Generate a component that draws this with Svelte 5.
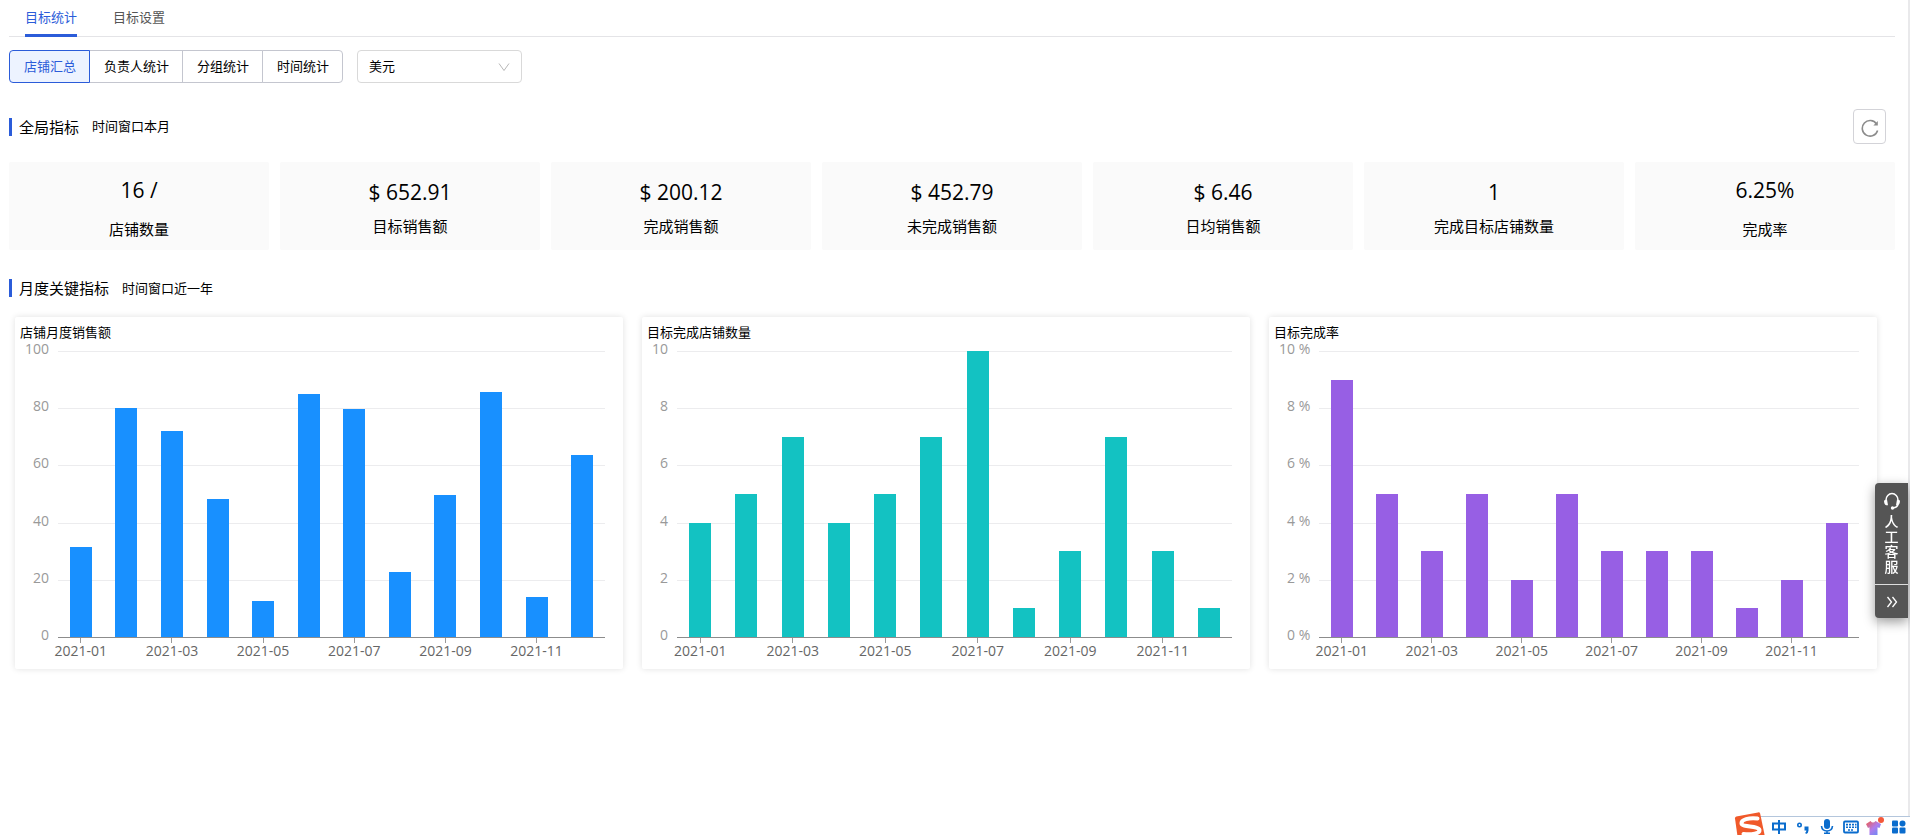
<script>
	const tabs = ['目标统计', '目标设置'];
	const views = ['店铺汇总', '负责人统计', '分组统计', '时间统计'];

	let activeTab = $state('目标统计');
	let activeView = $state('店铺汇总');
	let currency = $state('usd');

	const stats = [
		{ value: '16 /', label: '店铺数量', spaced: true },
		{ value: '$ 652.91', label: '目标销售额' },
		{ value: '$ 200.12', label: '完成销售额' },
		{ value: '$ 452.79', label: '未完成销售额' },
		{ value: '$ 6.46', label: '日均销售额' },
		{ value: '1', label: '完成目标店铺数量' },
		{ value: '6.25%', label: '完成率', spaced: true }
	];

	const months = Array.from({ length: 12 }, (_, i) => '2021-' + String(i + 1).padStart(2, '0'));

	const charts = [
		{
			title: '店铺月度销售额',
			color: 'blue',
			max: 100,
			ticks: ['100', '80', '60', '40', '20', '0'],
			values: [31.6, 80, 72.2, 48.3, 12.7, 85.1, 79.8, 22.8, 49.7, 85.8, 14, 63.5]
		},
		{
			title: '目标完成店铺数量',
			color: 'teal',
			max: 10,
			ticks: ['10', '8', '6', '4', '2', '0'],
			values: [4, 5, 7, 4, 5, 7, 10, 1, 3, 7, 3, 1]
		},
		{
			title: '目标完成率',
			color: 'purple',
			max: 10,
			ticks: ['10 %', '8 %', '6 %', '4 %', '2 %', '0 %'],
			values: [9, 5, 3, 5, 2, 5, 3, 3, 3, 1, 2, 4]
		}
	];
</script>

<div class="page">
	<nav class="tabs">
		{#each tabs as tab}
			<button class="tab" class:active={activeTab === tab} onclick={() => (activeTab = tab)}>{tab}</button>
		{/each}
	</nav>

	<div class="toolbar">
		<div class="group">
			{#each views as view}
				<button class:active={activeView === view} onclick={() => (activeView = view)}>{view}</button>
			{/each}
		</div>
		<div class="select">
			<select aria-label="币种" bind:value={currency}>
				<option value="usd">美元</option>
				<option value="cny">人民币</option>
			</select>
			<svg viewBox="0 0 12 12" width="12" height="12"><path d="M1 2.5 6 9.5 11 2.5" /></svg>
		</div>
	</div>

	<section>
		<header class="overview">
			<h2>全局指标</h2>
			<span>时间窗口本月</span>
			<button class="refresh" aria-label="刷新">
				<svg viewBox="0 0 18 18" width="18" height="18">
					<path d="M15.6 5A7.8 7.8 0 1 0 16.6 11.5" />
					<path class="head" d="M16.8 2v4.400h-4.400z" />
				</svg>
			</button>
		</header>
		<div class="stats">
			{#each stats as stat}
				<div class="stat" class:spaced={stat.spaced}>
					<strong>{stat.value}</strong>
					<span>{stat.label}</span>
				</div>
			{/each}
		</div>
	</section>

	<section>
		<header class="monthly">
			<h2>月度关键指标</h2>
			<span>时间窗口近一年</span>
		</header>
		<div class="charts">
			{#each charts as chart}
				<article class="chart">
					<h3>{chart.title}</h3>
					<div class="body">
						<div class="y-axis">
							{#each chart.ticks as tick}
								<span>{tick}</span>
							{/each}
						</div>
						<div class="plot">
							<div class="area">
								<div class="grid">
									{#each chart.ticks as tick}
										<i></i>
									{/each}
								</div>
								<div class="bars">
									{#each chart.values as value, i}
										<div class="band">
											<div
												class="bar {chart.color}"
												title="{months[i]}: {value}"
												style="height: {(value / chart.max) * 100}%"
											></div>
										</div>
									{/each}
								</div>
							</div>
							<div class="x-axis">
								{#each months as month, i}
									<div class="month">
										{#if i % 2 === 0}<span>{month}</span>{/if}
									</div>
								{/each}
							</div>
						</div>
					</div>
				</article>
			{/each}
		</div>
	</section>
</div>

<aside class="service">
	<button class="contact">
		<svg viewBox="0 0 18 18" width="18" height="18">
			<path class="line" d="M3 9.5V8a6 6.4 0 0 1 12 0v1.5M15 12.5q-.8 3-5 3.5" />
			<path d="M1 8.5 4 7.5 5 13.3H3.2Q1 12.5 1 8.5zM17 8.5l-3-1-1 5.8h1.8Q17 12.5 17 8.5z" />
			<circle cx="9.5" cy="16" r="1.7" />
		</svg>
		<span>人工客服</span>
	</button>
	<button class="collapse" aria-label="收起">
		<svg viewBox="0 0 12 12" width="12" height="12"><path d="M1.5 1 5.5 6 1.5 11M6.5 1 10.5 6 6.5 11" /></svg>
	</button>
</aside>

<div class="ime">
	<svg class="logo" viewBox="0 0 32 25" width="32" height="25">
		<path fill="#f0592a" d="M1 6.5Q.8 5 2.3 4.6L24 .4q1.8-.3 2.2 1.4L31 25H3.6z" />
		<path
			fill="none"
			stroke="#fff"
			stroke-width="4"
			stroke-linecap="round"
			d="M23.500 6.500C15 5.500 7 7.500 7.500 11.500c.5 4 17 2 18 6.500.5 3.500-8 5-16 4"
		/>
	</svg>
	<div class="tools">
		<svg viewBox="0 0 16 16" width="16" height="16">
			<path fill="none" stroke="#0a6ccd" stroke-width="2" d="M2 4.500h12v6H2zM8 1v14" />
		</svg>
		<svg viewBox="0 0 16 16" width="16" height="16">
			<circle cx="4.5" cy="6" r="1.7" fill="none" stroke="#0a6ccd" stroke-width="1.6" />
			<path fill="#0a6ccd" d="M9.500 7.500h4v4q0 2.500-2.500 3.500l-.8-1.200q1.200-.8 1.200-2.300H9.500z" />
		</svg>
		<svg viewBox="0 0 16 16" width="16" height="16">
			<rect x="5" y="0" width="6" height="10" rx="3" fill="#0a6ccd" />
			<path fill="none" stroke="#0a6ccd" stroke-width="1.6" d="M2.500 7q.5 5 5.500 5t5.500-5M8 12v2.500M5 14.200h6" />
		</svg>
		<svg viewBox="0 0 16 16" width="16" height="16">
			<rect x="1" y="2.500" width="14" height="11" rx="1" fill="none" stroke="#0a6ccd" stroke-width="1.8" />
			<path
				fill="none"
				stroke="#0a6ccd"
				stroke-width="1.6"
				stroke-dasharray="2 1"
				d="M3 5.600h10.500M3 8.200h10.500M5 11h6"
			/>
		</svg>
		<svg class="skin" viewBox="0 0 20 20" width="20" height="20">
			<defs>
				<linearGradient id="shirt" x1="0" y1="0" x2="1" y2="1">
					<stop offset="0" stop-color="#f25a48" />
					<stop offset="0.5" stop-color="#b07cec" />
					<stop offset="1" stop-color="#5b8cf5" />
				</linearGradient>
			</defs>
			<path fill="url(#shirt)" d="M1 7l4.500-3q2.500 3 5 0l5.500 3-1.500 4-2-.8V18h-8v-7.800L3 11z" />
			<circle cx="16" cy="3" r="3" fill="#f4583a" />
		</svg>
		<svg viewBox="0 0 16 16" width="16" height="16" fill="#0a6ccd">
			<rect x="1" y="1.500" width="6" height="6" rx="1" />
			<circle cx="11.500" cy="4.500" r="3" />
			<rect x="1" y="8.500" width="6" height="6" rx="1" />
			<rect x="8.500" y="8.500" width="6" height="6" rx="1" />
		</svg>
	</div>
</div>

<style>
	:global(body) {
		background: #fff;
		overflow: hidden;
	}

	.page {
		min-height: 100vh;
		box-sizing: border-box;
		padding: 0 13px 0 9px;
		border-right: 2px solid #e9e9eb;
		color: #000;
		font-family: 'Open Sans', 'Noto Sans CJK SC', sans-serif;
		font-size: 13px;
	}

	button,
	select {
		font: inherit;
		color: inherit;
		margin: 0;
		cursor: pointer;
	}

	h2,
	h3 {
		margin: 0;
		font-weight: 400;
	}

	svg {
		display: block;
	}

	.tabs {
		display: flex;
		gap: 36px;
		height: 36px;
		padding-left: 16px;
		border-bottom: 1px solid #e4e4e7;
	}
	.tab {
		height: 37px;
		padding: 0 0 2px;
		border: none;
		border-bottom: 3px solid transparent;
		background: none;
		color: #555;
	}
	.tab.active {
		color: #2b5cd9;
		border-bottom-color: #2b5cd9;
	}

	.toolbar {
		display: flex;
		gap: 14px;
		margin-top: 13px;
	}
	.group {
		display: flex;
	}
	.group button {
		height: 33px;
		padding: 0 13px 2px 14px;
		margin-left: -1px;
		border: 1px solid #c4c6cf;
		background: #fff;
	}
	.group button:first-child {
		margin-left: 0;
		border-radius: 4px 0 0 4px;
	}
	.group button:last-child {
		border-radius: 0 4px 4px 0;
	}
	.group button.active {
		position: relative;
		border-color: #2b5cd9;
		background: #edf3ff;
		color: #2b5cd9;
	}

	.select {
		display: grid;
		align-items: center;
		width: 165px;
	}
	.select select,
	.select svg {
		grid-area: 1 / 1;
	}
	.select select {
		appearance: none;
		height: 33px;
		padding: 0 11px 2px;
		border: 1px solid #d9d9d9;
		border-radius: 4px;
		background: #fff;
	}
	.select svg {
		justify-self: end;
		margin-right: 12px;
		fill: none;
		stroke: #b8b8b8;
		pointer-events: none;
	}

	header {
		display: flex;
		align-items: center;
	}
	header h2 {
		padding-left: 7px;
		border-left: 3px solid #2b5cd9;
		font-size: 15px;
		line-height: 18px;
	}
	header span {
		margin-left: 13px;
		padding-bottom: 2px;
	}
	.overview {
		height: 35px;
		margin-top: 26px;
	}
	.monthly {
		height: 18px;
		margin-top: 29px;
	}
	.refresh {
		display: grid;
		place-items: center;
		width: 33px;
		height: 35px;
		margin-left: auto;
		margin-right: 9px;
		padding: 3px 0 0;
		border: 1px solid #d3d3d8;
		border-radius: 4px;
		background: #fff;
	}
	.refresh path {
		fill: none;
		stroke: #8c8c8c;
		stroke-width: 1.6;
	}
	.refresh .head {
		fill: #8c8c8c;
		stroke: none;
	}

	.stats {
		display: grid;
		grid-template-columns: repeat(7, 1fr);
		gap: 11px;
		margin-top: 18px;
	}
	.stat {
		display: flex;
		flex-direction: column;
		align-items: center;
		justify-content: center;
		gap: 10px;
		box-sizing: border-box;
		height: 88px;
		padding-top: 6px;
		border-radius: 2px;
		background: #fafafa;
		font-size: 15px;
		line-height: 24px;
	}
	.stat.spaced {
		gap: 15px;
	}
	.stat strong {
		font-size: 21px;
		font-weight: 400;
	}

	.charts {
		display: grid;
		grid-template-columns: repeat(3, 1fr);
		gap: 19px;
		margin: 20px 18px 0 6px;
	}
	.chart {
		padding: 5px 18px 7px 5px;
		border-radius: 2px;
		box-shadow: 0 0 6px rgba(0, 0, 0, 0.12);
	}
	.chart h3 {
		font-size: 13px;
		line-height: 20px;
	}
	.body {
		display: flex;
		margin-top: 9px;
		font-size: 14px;
	}
	.y-axis {
		display: flex;
		flex-direction: column;
		justify-content: space-between;
		height: 306px;
		margin: -12px 9px 0 0;
		padding-left: 5px;
		color: #999;
		line-height: 20px;
		text-align: right;
		white-space: nowrap;
	}
	.plot {
		flex: 1;
	}
	.area {
		display: grid;
		height: 287px;
	}
	.grid,
	.bars {
		grid-area: 1 / 1;
		display: flex;
	}
	.grid {
		flex-direction: column;
		justify-content: space-between;
	}
	.grid i {
		height: 1px;
		background: #ececee;
	}
	.grid i:last-child {
		background: #8c8c8c;
	}
	.bars {
		padding-bottom: 1px;
	}
	.band {
		display: flex;
		flex: 1;
		align-items: flex-end;
		justify-content: center;
	}
	.bar {
		width: 22px;
	}
	.blue {
		background: #1890ff;
	}
	.teal {
		background: #13c2c2;
	}
	.purple {
		background: #975fe4;
	}

	.x-axis {
		display: flex;
		color: #666;
	}
	.month {
		display: flex;
		flex: 1;
		flex-direction: column;
		align-items: center;
		width: 0;
		height: 24px;
		line-height: 16px;
		white-space: nowrap;
	}
	.month:nth-child(odd)::before {
		content: '';
		width: 1px;
		height: 5px;
		background: #999;
	}

	.service {
		position: fixed;
		top: 483px;
		right: 2px;
		width: 33px;
		border-radius: 4px 0 0 4px;
		background: #555;
		box-shadow: 0 4px 12px rgba(0, 0, 0, 0.4);
		font-family: 'Noto Sans CJK SC', sans-serif;
		font-size: 14px;
		font-weight: 500;
	}
	.service button {
		display: flex;
		flex-direction: column;
		align-items: center;
		width: 100%;
		border: none;
		background: none;
		color: #fff;
	}
	.contact {
		height: 101px;
		padding: 9px 0 0;
	}
	.contact span {
		width: 14px;
		margin-top: 4px;
		line-height: 15px;
	}
	.contact svg {
		fill: #fff;
	}
	.contact .line {
		fill: none;
		stroke: #fff;
		stroke-width: 1.5;
	}
	.service .collapse {
		justify-content: center;
		height: 34px;
		padding: 0;
		border-top: 1px solid #ddd;
	}
	.collapse svg {
		fill: none;
		stroke: #fff;
		stroke-width: 1.3;
	}

	.ime {
		position: fixed;
		right: 0;
		bottom: 0;
		display: flex;
		align-items: flex-end;
	}
	.logo {
		z-index: 1;
		margin: 0 -6px -2px 0;
	}
	.tools {
		display: flex;
		align-items: center;
		gap: 8px;
		height: 16px;
		padding: 2px 3px 0 11px;
		border-top: 1px solid #b4c6dc;
		background: #fff;
	}
	.skin {
		margin: 0 -2px;
	}
</style>
